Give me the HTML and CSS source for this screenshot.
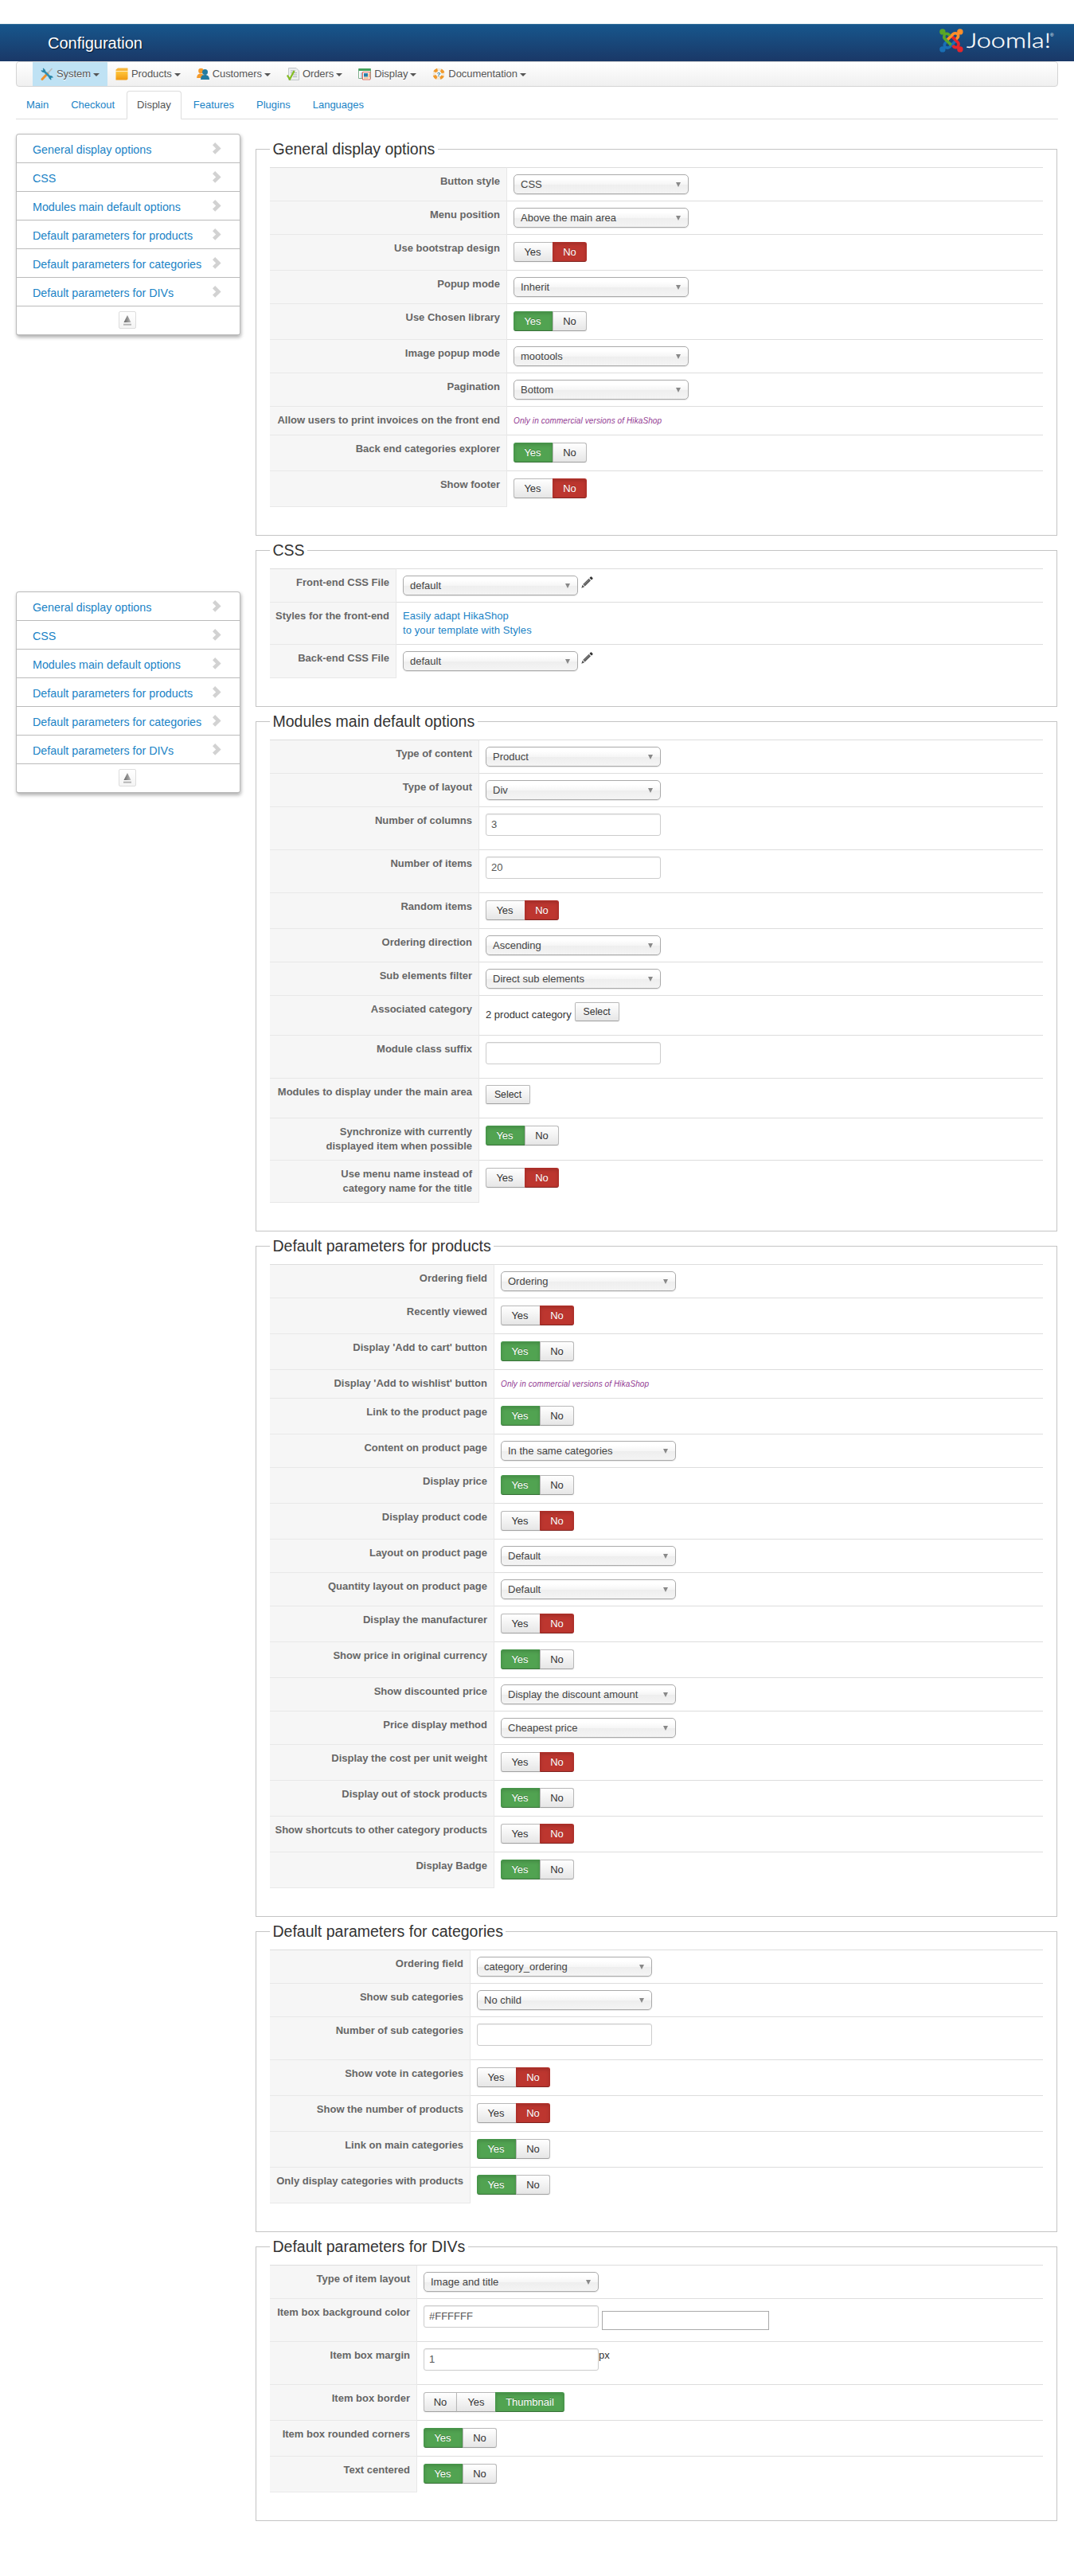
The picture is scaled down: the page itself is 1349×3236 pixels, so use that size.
FILE: index.html
```html
<!DOCTYPE html>
<html lang="en">
<head>
<meta charset="utf-8">
<title>Configuration</title>
<link rel="stylesheet" href="styles.css">
</head>
<body>
<svg class="defs" width="0" height="0">
  <defs>
    <linearGradient id="fade" x1="0" y1="0" x2="1" y2="0"><stop offset="0" stop-color="#666"/><stop offset="1" stop-color="#bbb"/></linearGradient>
    <linearGradient id="gold" x1="0" y1="0" x2="0" y2="1"><stop offset="0" stop-color="#ffc53a"/><stop offset="1" stop-color="#f09a12"/></linearGradient>
    <symbol id="chev" viewBox="0 0 11 15"><path d="M0 3.2 3.2 0 10.6 7.4 3.2 14.8 0 11.6 4.2 7.4z" fill="#d2d2d2"/></symbol>
    <symbol id="eject" viewBox="0 0 10 13"><path d="M5 0 9.5 9H.5z" fill="url(#fade)"/><path d="M0 10.700h10v2H0z" fill="#b5b5b5"/></symbol>
    <symbol id="pencil" viewBox="0 0 15 15"><path d="M.3 14.700l1.300-4 2.500 2.500z" fill="#555"/><path d="M2.200 10 9.600 2.800l2.400 2.400L4.700 12.600z" fill="#5a5a5a"/><path d="M3.400 10.800 10.600 3.800" stroke="#999" stroke-width=".8"/><path d="M10.400 2 11.600.8a1.200 1.200 0 0 1 1.700 0l.9.900a1.200 1.200 0 0 1 0 1.700L13 4.500z" fill="#333"/></symbol>
  </defs>
</svg>

<header class="header">
  <h1 class="title">Configuration</h1>
  <svg class="logo" width="146" height="32" viewBox="0 0 146 32">
    <g fill="#1a6fb5" stroke="#1a6fb5" transform="rotate(-90 14.9 14.9)"><circle cx="3.9" cy="3.9" r="3.7" stroke="none"/><path d="M13 8.800C11 5.400 8.600 6 6.800 6.800 5.200 9.500 5 11.200 7.200 13.200L14.600 20.400" fill="none" stroke-width="3.600"/></g>
    <g fill="#e5262c" stroke="#e5262c" transform="rotate(180 14.9 14.9)"><circle cx="3.9" cy="3.9" r="3.7" stroke="none"/><path d="M13 8.800C11 5.400 8.600 6 6.800 6.800 5.200 9.500 5 11.200 7.200 13.200L14.600 20.400" fill="none" stroke-width="3.600"/></g>
    <g fill="#ff8f29" stroke="#ff8f29" transform="rotate(90 14.9 14.9)"><circle cx="3.900" cy="3.900" r="3.700" stroke="none"/><path d="M13 8.800C11 5.400 8.600 6 6.800 6.800 5.200 9.500 5 11.200 7.200 13.200L14.600 20.400" fill="none" stroke-width="3.600"/></g>
    <g fill="#5aa527" stroke="#5aa527"><circle cx="3.900" cy="3.900" r="3.700" stroke="none"/><path d="M13 8.800C11 5.400 8.600 6 6.800 6.800 5.200 9.500 5 11.200 7.200 13.200L14.600 20.400" fill="none" stroke-width="3.600"/></g>
    <text class="word" x="34" y="24" textLength="106" lengthAdjust="spacingAndGlyphs">Joomla!</text>
    <text class="reg" x="139" y="10">®</text>
  </svg>
</header>

<div class="page">
  <nav class="navbar">
    <a class="nav on"><svg width="16" height="16" viewBox="0 0 16 16"><path d="M2 14.500 9 7" stroke="#f0922b" stroke-width="3" stroke-linecap="round"/><path d="M9 7l5.500-6" stroke="#b9b9b9" stroke-width="1.600"/><path d="M3.500 3.500l9.500 9.500" stroke="#2f8fb3" stroke-width="2.600"/><path d="M.5 3.500a3.400 3.400 0 0 0 5 2L6 3 3.500.5C2 .8 3.600 2.300 3.200 3.400 2 4 1.500 3 .5 3.500zM15.800 12.500a3.400 3.400 0 0 0-5-2l-.5 2.500 2.500 2.600c1.600-.2 0-1.900.4-3 1.200-.5 1.600.4 2.600-.1z" fill="#2a86a8"/></svg><span>System</span><i></i></a>
    <a class="nav"><svg width="16" height="16" viewBox="0 0 16 16"><path d="M.5 2.500 3 .5h12.500v4H.5z" fill="#f7b63c"/><path d="M.5 5h15v9.500l-1.500 1H.5z" fill="url(#gold)"/><path d="M.5 4.500h15" stroke="#fff0c4" stroke-width=".8"/></svg><span>Products</span><i></i></a>
    <a class="nav"><svg width="16" height="16" viewBox="0 0 16 16"><circle cx="5.500" cy="4" r="3.300" fill="#f49b2c"/><path d="M.2 13c0-4 2-5.500 5-5.500 2 0 4 1 4 5.500z" fill="#f49b2c"/><circle cx="10.500" cy="5.500" r="3.500" fill="#237ba0"/><path d="M5 15c0-4.500 2.200-6 5.500-6S16 11 16 15z" fill="#237ba0"/></svg><span>Customers</span><i></i></a>
    <a class="nav"><svg width="16" height="16" viewBox="0 0 16 16"><path d="M2.500.5H12l3.500 3.500v11.500h-13z" fill="#eceeef" stroke="#c3c7ca"/><path d="M5 4h6M5 6.500h8M8 9h5M8 11.500h5" stroke="#a9b1b6"/><path d="M.8 9.500 4 14.500 9.500 4" fill="none" stroke="#84bd22" stroke-width="2.200"/></svg><span>Orders</span><i></i></a>
    <a class="nav"><svg width="16" height="16" viewBox="0 0 16 16"><path d="M.5 1.500h15v12H.5z" fill="#fff" stroke="#7fae8d"/><path d="M.5 1h15v3H.5z" fill="#43a35c"/><path d="M3 6h2v7H3z" fill="#b9cbd6"/><path d="M5.500 5.500h9.500v9.500H5.500z" fill="#fff" stroke="#dd6a5c"/><path d="M7 7h5v4.500H7z" fill="#2a7fa9"/><path d="M7 13h6M13.300 7v5" stroke="#ef9a4a"/></svg><span>Display</span><i></i></a>
    <a class="nav"><svg width="16" height="16" viewBox="0 0 16 16"><circle cx="8" cy="8" r="5.600" fill="none" stroke="#f2e8d8" stroke-width="3.500"/><circle cx="8" cy="8" r="5.600" fill="none" stroke="#f09a2c" stroke-width="3.800" stroke-dasharray="4.400 4.400" stroke-dashoffset="-2.200"/><text x="8" y="11" text-anchor="middle" class="q">?</text></svg><span>Documentation</span><i></i></a>
  </nav>

  <nav class="tabs">
    <a class="tab">Main</a><a class="tab">Checkout</a><a class="tab on">Display</a><a class="tab">Features</a><a class="tab">Plugins</a><a class="tab">Languages</a>
  </nav>

  <div class="body">
    <aside class="side">
      <div class="menu">
        <a>General display options<svg><use href="#chev"/></svg></a>
        <a>CSS<svg><use href="#chev"/></svg></a>
        <a>Modules main default options<svg><use href="#chev"/></svg></a>
        <a>Default parameters for products<svg><use href="#chev"/></svg></a>
        <a>Default parameters for categories<svg><use href="#chev"/></svg></a>
        <a>Default parameters for DIVs<svg><use href="#chev"/></svg></a>
        <div class="foot"><b><svg><use href="#eject"/></svg></b></div>
      </div>
      <div class="menu">
        <a>General display options<svg><use href="#chev"/></svg></a>
        <a>CSS<svg><use href="#chev"/></svg></a>
        <a>Modules main default options<svg><use href="#chev"/></svg></a>
        <a>Default parameters for products<svg><use href="#chev"/></svg></a>
        <a>Default parameters for categories<svg><use href="#chev"/></svg></a>
        <a>Default parameters for DIVs<svg><use href="#chev"/></svg></a>
        <div class="foot"><b><svg><use href="#eject"/></svg></b></div>
      </div>
    </aside>

    <main class="main">
      <fieldset class="general">
        <legend>General display options</legend>
        <div class="row sel"><div class="key">Button style</div><div class="val"><div class="chosen">CSS</div></div></div>
        <div class="row sel"><div class="key">Menu position</div><div class="val"><div class="chosen">Above the main area</div></div></div>
        <div class="row tog"><div class="key">Use bootstrap design</div><div class="val"><div class="group"><b>Yes</b><b class="red">No</b></div></div></div>
        <div class="row sel"><div class="key">Popup mode</div><div class="val"><div class="chosen">Inherit</div></div></div>
        <div class="row tog"><div class="key">Use Chosen library</div><div class="val"><div class="group"><b class="green">Yes</b><b>No</b></div></div></div>
        <div class="row sel"><div class="key">Image popup mode</div><div class="val"><div class="chosen">mootools</div></div></div>
        <div class="row sel"><div class="key">Pagination</div><div class="val"><div class="chosen">Bottom</div></div></div>
        <div class="row txt"><div class="key">Allow users to print invoices on the front end</div><div class="val"><em>Only in commercial versions of HikaShop</em></div></div>
        <div class="row tog"><div class="key">Back end categories explorer</div><div class="val"><div class="group"><b class="green">Yes</b><b>No</b></div></div></div>
        <div class="row tog"><div class="key">Show footer</div><div class="val"><div class="group"><b>Yes</b><b class="red">No</b></div></div></div>
      </fieldset>

      <fieldset class="css">
        <legend>CSS</legend>
        <div class="row sel"><div class="key">Front-end CSS File</div><div class="val"><div class="chosen">default</div><svg class="pencil"><use href="#pencil"/></svg></div></div>
        <div class="row two"><div class="key">Styles for the front-end</div><div class="val"><a class="promo">Easily adapt HikaShop<br>to your template with Styles</a></div></div>
        <div class="row sel"><div class="key">Back-end CSS File</div><div class="val"><div class="chosen">default</div><svg class="pencil"><use href="#pencil"/></svg></div></div>
      </fieldset>

      <fieldset class="modules">
        <legend>Modules main default options</legend>
        <div class="row sel"><div class="key">Type of content</div><div class="val"><div class="chosen">Product</div></div></div>
        <div class="row sel"><div class="key">Type of layout</div><div class="val"><div class="chosen">Div</div></div></div>
        <div class="row inp"><div class="key">Number of columns</div><div class="val"><div class="input">3</div></div></div>
        <div class="row inp"><div class="key">Number of items</div><div class="val"><div class="input">20</div></div></div>
        <div class="row tog"><div class="key">Random items</div><div class="val"><div class="group"><b>Yes</b><b class="red">No</b></div></div></div>
        <div class="row sel"><div class="key">Ordering direction</div><div class="val"><div class="chosen">Ascending</div></div></div>
        <div class="row sel"><div class="key">Sub elements filter</div><div class="val"><div class="chosen">Direct sub elements</div></div></div>
        <div class="row btn"><div class="key">Associated category</div><div class="val"><span class="cat">2 product category</span><div class="button">Select</div></div></div>
        <div class="row inp"><div class="key">Module class suffix</div><div class="val"><div class="input"></div></div></div>
        <div class="row btn"><div class="key">Modules to display under the main area</div><div class="val"><div class="button">Select</div></div></div>
        <div class="row two"><div class="key">Synchronize with currently<br>displayed item when possible</div><div class="val"><div class="group"><b class="green">Yes</b><b>No</b></div></div></div>
        <div class="row two"><div class="key">Use menu name instead of<br>category name for the title</div><div class="val"><div class="group"><b>Yes</b><b class="red">No</b></div></div></div>
      </fieldset>

      <fieldset class="products">
        <legend>Default parameters for products</legend>
        <div class="row sel"><div class="key">Ordering field</div><div class="val"><div class="chosen">Ordering</div></div></div>
        <div class="row tog"><div class="key">Recently viewed</div><div class="val"><div class="group"><b>Yes</b><b class="red">No</b></div></div></div>
        <div class="row tog"><div class="key">Display 'Add to cart' button</div><div class="val"><div class="group"><b class="green">Yes</b><b>No</b></div></div></div>
        <div class="row txt"><div class="key">Display 'Add to wishlist' button</div><div class="val"><em>Only in commercial versions of HikaShop</em></div></div>
        <div class="row tog"><div class="key">Link to the product page</div><div class="val"><div class="group"><b class="green">Yes</b><b>No</b></div></div></div>
        <div class="row sel"><div class="key">Content on product page</div><div class="val"><div class="chosen">In the same categories</div></div></div>
        <div class="row tog"><div class="key">Display price</div><div class="val"><div class="group"><b class="green">Yes</b><b>No</b></div></div></div>
        <div class="row tog"><div class="key">Display product code</div><div class="val"><div class="group"><b>Yes</b><b class="red">No</b></div></div></div>
        <div class="row sel"><div class="key">Layout on product page</div><div class="val"><div class="chosen">Default</div></div></div>
        <div class="row sel"><div class="key">Quantity layout on product page</div><div class="val"><div class="chosen">Default</div></div></div>
        <div class="row tog"><div class="key">Display the manufacturer</div><div class="val"><div class="group"><b>Yes</b><b class="red">No</b></div></div></div>
        <div class="row tog"><div class="key">Show price in original currency</div><div class="val"><div class="group"><b class="green">Yes</b><b>No</b></div></div></div>
        <div class="row sel"><div class="key">Show discounted price</div><div class="val"><div class="chosen">Display the discount amount</div></div></div>
        <div class="row sel"><div class="key">Price display method</div><div class="val"><div class="chosen">Cheapest price</div></div></div>
        <div class="row tog"><div class="key">Display the cost per unit weight</div><div class="val"><div class="group"><b>Yes</b><b class="red">No</b></div></div></div>
        <div class="row tog"><div class="key">Display out of stock products</div><div class="val"><div class="group"><b class="green">Yes</b><b>No</b></div></div></div>
        <div class="row tog"><div class="key">Show shortcuts to other category products</div><div class="val"><div class="group"><b>Yes</b><b class="red">No</b></div></div></div>
        <div class="row tog"><div class="key">Display Badge</div><div class="val"><div class="group"><b class="green">Yes</b><b>No</b></div></div></div>
      </fieldset>

      <fieldset class="categories">
        <legend>Default parameters for categories</legend>
        <div class="row sel"><div class="key">Ordering field</div><div class="val"><div class="chosen">category_ordering</div></div></div>
        <div class="row sel"><div class="key">Show sub categories</div><div class="val"><div class="chosen">No child</div></div></div>
        <div class="row inp"><div class="key">Number of sub categories</div><div class="val"><div class="input"></div></div></div>
        <div class="row tog"><div class="key">Show vote in categories</div><div class="val"><div class="group"><b>Yes</b><b class="red">No</b></div></div></div>
        <div class="row tog"><div class="key">Show the number of products</div><div class="val"><div class="group"><b>Yes</b><b class="red">No</b></div></div></div>
        <div class="row tog"><div class="key">Link on main categories</div><div class="val"><div class="group"><b class="green">Yes</b><b>No</b></div></div></div>
        <div class="row tog"><div class="key">Only display categories with products</div><div class="val"><div class="group"><b class="green">Yes</b><b>No</b></div></div></div>
      </fieldset>

      <fieldset class="divs">
        <legend>Default parameters for DIVs</legend>
        <div class="row sel"><div class="key">Type of item layout</div><div class="val"><div class="chosen">Image and title</div></div></div>
        <div class="row inp"><div class="key">Item box background color</div><div class="val"><div class="input">#FFFFFF</div><div class="swatch"></div></div></div>
        <div class="row inp"><div class="key">Item box margin</div><div class="val"><div class="input">1</div><span>px</span></div></div>
        <div class="row tog"><div class="key">Item box border</div><div class="val"><div class="group three"><b>No</b><b>Yes</b><b class="green">Thumbnail</b></div></div></div>
        <div class="row tog"><div class="key">Item box rounded corners</div><div class="val"><div class="group"><b class="green">Yes</b><b>No</b></div></div></div>
        <div class="row tog"><div class="key">Text centered</div><div class="val"><div class="group"><b class="green">Yes</b><b>No</b></div></div></div>
      </fieldset>
    </main>
  </div>
</div>
</body>
</html>
```
FILE: styles.css
```css
* { box-sizing: border-box; }
body {
  margin: 0;
  padding-top: 30px;
  height: 3236px;
  background: #fff;
  color: #333;
  font: 13px/18px "Liberation Sans", Arial, sans-serif;
}
.defs { display: block; position: absolute; }
a { color: #1a83c6; text-decoration: none; }

.header {
  display: flex;
  justify-content: space-between;
  height: 47px;
  padding: 0 23px 0 60px;
  background: linear-gradient(#17568c, #1a3867);
  border-top: 1px solid #34709a;
}
.title {
  margin: 0;
  font-size: 20px;
  font-weight: normal;
  line-height: 46px;
  color: #fff;
  text-shadow: 1px 1px 1px #0b1f3a;
}
.logo { margin-top: 5px; overflow: visible; }
.word { font: 300 25px Lato, sans-serif; fill: #fff; stroke: #fff; stroke-width: .3px; }
.reg { font: 6px "Liberation Sans", sans-serif; fill: #fff; }

.page { padding: 0 20px; }

.navbar {
  display: flex;
  height: 32px;
  padding-left: 20px;
  border: 1px solid #d4d4d4;
  border-radius: 4px;
  background: linear-gradient(#fff, #f0f0f0);
}
.nav {
  display: flex;
  align-items: center;
  padding: 0 10px;
  color: #555;
}
.nav.on { background: #bfe2f4; }
.nav svg { margin: -1px 4px 0 0; }
.nav span { padding-bottom: 1px; letter-spacing: -.07px; text-shadow: 0 1px 0 #fff; }
.nav i {
  margin: 1px 0 0 3px;
  border: 4px solid transparent;
  border-top-color: #555;
  border-bottom: 0;
}
.q { font: bold 8px "Liberation Sans", sans-serif; fill: #237ba0; }

.tabs {
  display: flex;
  gap: 2px;
  margin-top: 5px;
  height: 36px;
  border-bottom: 1px solid #ddd;
}
.tab {
  height: 36px;
  padding: 8px 12px;
  border: 1px solid transparent;
  border-radius: 4px 4px 0 0;
}
.tab.on { color: #555; background: #fff; border-color: #ddd #ddd #fff; }

.body { display: flex; gap: 19px; }
.side {
  display: flex;
  flex-direction: column;
  gap: 321px;
  width: 282px;
  padding-top: 18px;
}
.menu {
  height: 254px;
  border: 1px solid #bbb;
  border-bottom-width: 2px;
  border-radius: 4px;
  box-shadow: 1px 2px 4px rgba(0, 0, 0, .3);
}
.menu a {
  display: flex;
  justify-content: space-between;
  height: 36px;
  padding: 0 23px 0 20px;
  border-bottom: 1px solid #bbb;
  font-size: 14.300px;
  line-height: 39px;
}
.menu a svg { width: 11px; height: 15px; margin-top: 10px; }
.foot { display: flex; justify-content: center; padding: 6px 2px 0 0; }
.foot b {
  display: flex;
  width: 22px;
  height: 22px;
  align-items: center;
  justify-content: center;
  border: 1px solid #ddd;
  border-radius: 2px;
  background: linear-gradient(#fff, #f4f4f4);
}
.foot svg { width: 10px; height: 13px; }

.main { width: 1007px; padding-top: 19px; }
fieldset {
  margin: 0;
  padding: 4px 17px 36px;
  min-width: 0;
  border: 1px solid #c4c4c4;
}
legend { padding: 0 3.500px; font-size: 19.500px; line-height: 37px; }
.general { --key: 298px; }
.css { --key: 159px; }
.modules { --key: 263px; }
.products { --key: 282px; }
.categories { --key: 252px; }
.divs { --key: 185px; }

.row { display: flex; }
.sel { height: 42px; }
.tog { height: 45px; }
.txt { height: 36px; }
.inp { height: 54px; }
.btn { height: 50px; }
.two { height: 53px; }
.key {
  width: var(--key);
  padding: 8px 8px 0 0;
  border-top: 1px solid #e8e8e8;
  border-right: 1px solid #e8e8e8;
  background: #f6f6f6;
  color: #666;
  font-weight: bold;
  text-align: right;
  white-space: nowrap;
}
legend + .row .key { border-top-color: #ddd; }
.row:last-child .key { box-shadow: 0 1px 0 #e8e8e8; }
.val {
  display: flex;
  flex: 1;
  align-items: flex-start;
  padding: 8px 8px 0;
  border-top: 1px solid #ddd;
}
.promo { letter-spacing: .1px; }

.chosen {
  display: flex;
  align-items: center;
  justify-content: space-between;
  width: 220px;
  height: 25px;
  padding: 0 9px 0 8px;
  border: 1px solid #aaa;
  border-radius: 5px;
  background: linear-gradient(#fff 20%, #f6f6f6 50%, #eee 52%, #f4f4f4 100%);
  box-shadow: 0 1px 1px rgba(0, 0, 0, .1);
  color: #444;
}
.chosen::after {
  content: "";
  border: 3.500px solid transparent;
  border-top: 6px solid #888;
  border-bottom: 0;
}
.input {
  width: 220px;
  height: 28px;
  padding: 4px 6px;
  border: 1px solid #ccc;
  border-radius: 3px;
  box-shadow: inset 0 1px 1px rgba(0, 0, 0, .075);
  color: #555;
}
.swatch { width: 210px; height: 24px; margin: 7px 0 0 4px; border: 1px solid #a9a9a9; }
.pencil { width: 15px; height: 15px; margin: 1px 0 0 4px; }

.group { display: flex; margin-top: 1px; }
.group b, .button {
  border: 1px solid #b8b8b8;
  border-bottom-color: #a2a2a2;
  background: linear-gradient(#fff, #e6e6e6);
  box-shadow: 0 1px 2px rgba(0, 0, 0, .05);
  font-weight: normal;
  text-align: center;
}
.group b { width: 43px; height: 25px; line-height: 23px; }
.group b + b { margin-left: -1px; }
.group b:first-child { width: 50px; padding-right: 2px; border-radius: 3px 0 0 3px; }
.group b:last-child { border-radius: 0 3px 3px 0; }
.group.three b:first-child { width: 42px; padding-right: 0; }
.group.three b:nth-child(2) { width: 50px; }
.group.three b:last-child { width: 87px; }
.group .green, .group .red {
  color: #fff;
  text-shadow: 0 -1px 0 rgba(0, 0, 0, .25);
  box-shadow: inset 0 2px 4px rgba(0, 0, 0, .15);
}
.group .green { background: #51a351; border-color: #46964a #46964a #387038; }
.group .red { background: #bd362f; border-color: #ae2e28 #ae2e28 #802420; }
.button {
  width: 56px;
  height: 24px;
  border-radius: 2px;
  font-size: 12.300px;
  line-height: 22px;
}
.cat { margin: 7px 4px 0 0; }
em {
  padding-top: 1px;
  color: #933b93;
  font-size: 10px;
  letter-spacing: .1px;
}
```
